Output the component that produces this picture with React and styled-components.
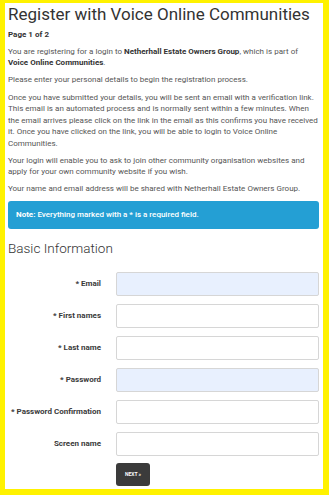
import React from "react";
import styled, { createGlobalStyle } from "styled-components";

const GlobalStyle = createGlobalStyle`
  * {
    box-sizing: border-box;
  }

  body {
    margin: 0;
    background: #ffffff;
    font-family: Roboto, "Liberation Sans", sans-serif;
  }
`;

const Frame = styled.div`
  width: 329px;
  margin-bottom: 4px;
  padding: 0 4px 3px 3px;
  border-style: solid;
  border-color: #fff200;
  border-width: 3px 6px 6px 5px;
  background: #ffffff;
`;

const Title = styled.h1`
  margin: 0 0 3.5px;
  font-size: 17px;
  font-weight: 400;
  line-height: 22px;
  color: #333333;
  white-space: nowrap;
`;

const P = styled.p`
  margin: 0 0 5.7px;
  font-size: 8px;
  line-height: 11.5px;
  word-spacing: 0.1px;
  color: #555555;

  b {
    font-weight: 700;
    color: #333333;
  }
`;

const Note = styled.div`
  padding: 8.25px 8px;
  border-radius: 3px;
  background: #249fd4;
  color: #ffffff;
  font-size: 8px;
  line-height: 11.5px;
  font-weight: 500;

  b {
    font-weight: 700;
  }
`;

const Heading = styled.h3`
  margin: 10px 0 15px;
  font-size: 13.5px;
  font-weight: 300;
  line-height: 18px;
  color: #333333;
`;

const Form = styled.form`
  display: grid;
  grid-template-columns: 93px 1fr;
  column-gap: 15px;
  row-gap: 8px;
`;

const Label = styled.label`
  align-self: center;
  text-align: right;
  font-size: 8px;
  font-weight: 700;
  color: #3a3a3a;
  white-space: nowrap;
`;

const Input = styled.input`
  display: block;
  width: 100%;
  height: 24px;
  margin: 0;
  padding: 0 6px;
  border: 1px solid #d6d6d6;
  border-radius: 2px;
  background: ${(p) => (p.$filled ? "#e8f0fe" : "#ffffff")};
  font-family: inherit;
  font-size: 8px;
  outline: none;
`;

const Button = styled.button`
  grid-column: 2;
  justify-self: start;
  width: 34px;
  height: 23px;
  margin-top: -1px;
  padding: 0;
  border: none;
  border-radius: 3px;
  background: #3b3b3b;
  color: #ffffff;
  font-family: inherit;
  font-size: 5px;
  font-weight: 700;
  cursor: pointer;
`;

const fields = [
  { label: "* Email", type: "email", filled: true },
  { label: "* First names", type: "text" },
  { label: "* Last name", type: "text" },
  { label: "* Password", type: "password", filled: true },
  { label: "* Password Confirmation", type: "password" },
  { label: "Screen name", type: "text" },
];

export default function App() {
  return (
    <>
      <GlobalStyle />
      <Frame>
        <Title>Register with Voice Online Communities</Title>
        <P>
          <b>Page 1 of 2</b>
        </P>
        <P>
          You are registering for a login to <b>Netherhall Estate Owners Group</b>, which is part of
          <br />
          <b>Voice Online Communities</b>.
        </P>
        <P>Please enter your personal details to begin the registration process.</P>
        <P>
          Once you have submitted your details, you will be sent an email with a verification link.
          This email is an automated process and is normally sent within a few minutes. When the
          email arrives please click on the link in the email as this confirms you have received
          <br />
          it. Once you have clicked on the link, you will be able to login to Voice Online
          Communities.
        </P>
        <P>
          Your login will enable you to ask to join other community organisation websites and apply
          for your own community website if you wish.
        </P>
        <P>Your name and email address will be shared with Netherhall Estate Owners Group.</P>
        <Note>
          <b>Note:</b> Everything marked with a * is a required field.
        </Note>
        <Heading>Basic Information</Heading>
        <Form onSubmit={(e) => e.preventDefault()}>
          {fields.map((f) => (
            <React.Fragment key={f.label}>
              <Label>{f.label}</Label>
              <Input type={f.type} $filled={f.filled} />
            </React.Fragment>
          ))}
          <Button type="submit">NEXT »</Button>
        </Form>
      </Frame>
    </>
  );
}
